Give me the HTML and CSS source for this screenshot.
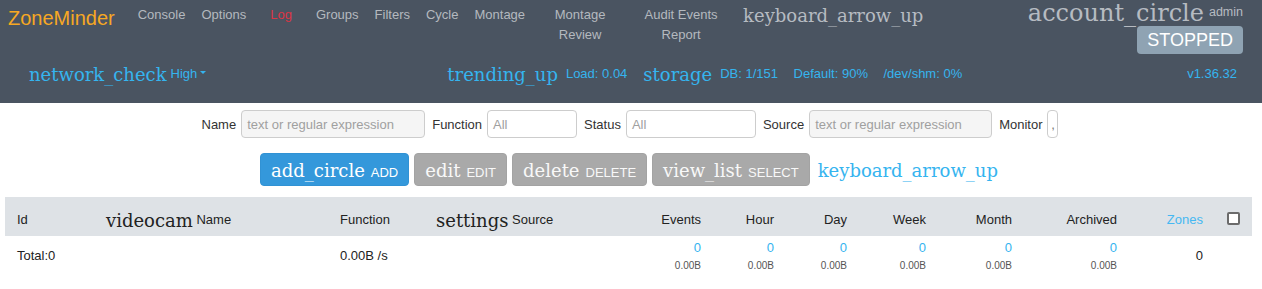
FILE: index.html
```html
<!DOCTYPE html>
<html lang="en">
<head>
<meta charset="utf-8">
<title>ZoneMinder - Console</title>
<link rel="stylesheet" href="styles.css">
</head>
<body>
<nav class="navbar">
  <div class="nav-top">
    <a class="brand" href="#">ZoneMinder</a>
    <ul class="nav-links">
      <li>Console</li>
      <li>Options</li>
      <li class="log">Log</li>
      <li>Groups</li>
      <li>Filters</li>
      <li>Cycle</li>
      <li>Montage</li>
      <li class="wrap-mr">Montage Review</li>
      <li class="wrap-ae">Audit Events Report</li>
    </ul>
    <span class="icon toggle-icon">keyboard_arrow_up</span>
    <div class="account">
      <div class="account-row">
        <span class="icon account-icon">account_circle</span><span class="admin">admin</span>
      </div>
      <span class="status-btn">STOPPED</span>
    </div>
  </div>
  <div class="nav-status">
    <div class="bandwidth"><span class="icon">network_check</span><span class="high">High</span><span class="caret"></span></div>
    <div class="stats"><span class="icon">trending_up</span><span class="after-icon">Load: 0.04</span><span class="icon stat-icon">storage</span><span class="after-icon">DB: 1/151</span><span class="stat">Default: 90%</span><span class="stat">/dev/shm: 0%</span></div>
    <div class="version">v1.36.32</div>
  </div>
</nav>

<div class="filters">
  <div class="filter"><span>Name</span><span class="input text w-name">text or regular expression</span></div>
  <div class="filter"><span>Function</span><span class="input w-fn">All</span></div>
  <div class="filter"><span>Status</span><span class="input w-st">All</span></div>
  <div class="filter"><span>Source</span><span class="input text w-src">text or regular expression</span></div>
  <div class="filter"><span>Monitor</span><span class="input w-mon">,</span></div>
</div>

<div class="actions">
  <span class="btn btn-primary"><span class="icon">add_circle</span><span class="lbl">ADD</span></span>
  <span class="btn btn-normal"><span class="icon">edit</span><span class="lbl">EDIT</span></span>
  <span class="btn btn-normal"><span class="icon">delete</span><span class="lbl">DELETE</span></span>
  <span class="btn btn-normal"><span class="icon">view_list</span><span class="lbl">SELECT</span></span>
  <span class="icon collapse-icon">keyboard_arrow_up</span>
</div>

<table class="monitors">
  <thead>
    <tr>
      <th class="c-id">Id</th>
      <th class="c-name"><span class="icon th-icon">videocam</span> Name</th>
      <th class="c-fn">Function</th>
      <th class="c-src"><span class="icon th-icon">settings</span> Source</th>
      <th class="c-ev num">Events</th>
      <th class="c-hr num">Hour</th>
      <th class="c-day num">Day</th>
      <th class="c-wk num">Week</th>
      <th class="c-mo num">Month</th>
      <th class="c-ar num">Archived</th>
      <th class="c-zn num zones">Zones</th>
      <th class="c-cb"><span class="checkbox"></span></th>
    </tr>
  </thead>
  <tbody>
    <tr>
      <td>Total:0</td>
      <td></td>
      <td>0.00B /s</td>
      <td></td>
      <td class="num"><div class="cnt">0</div><div class="size">0.00B</div></td>
      <td class="num"><div class="cnt">0</div><div class="size">0.00B</div></td>
      <td class="num"><div class="cnt">0</div><div class="size">0.00B</div></td>
      <td class="num"><div class="cnt">0</div><div class="size">0.00B</div></td>
      <td class="num"><div class="cnt">0</div><div class="size">0.00B</div></td>
      <td class="num"><div class="cnt">0</div><div class="size">0.00B</div></td>
      <td class="num">0</td>
      <td></td>
    </tr>
  </tbody>
</table>
</body>
</html>
```

FILE: styles.css
```css
* { box-sizing: border-box; }

body {
  margin: 0;
  font-family: "Liberation Sans", Arial, sans-serif;
  font-size: 13px;
  color: #222;
  background: #fff;
}

.icon {
  font-family: "DejaVu Serif", serif;
  font-weight: normal;
  line-height: 1;
}

/* ---------- navbar ---------- */
.navbar {
  background: #4a5461;
  height: 103px;
}

.nav-top {
  display: flex;
  align-items: flex-start;
  height: 58px;
  padding: 0 19px 0 8px;
}

.brand {
  font-size: 20px;
  line-height: 24px;
  margin-top: 6px;
  color: #f7a823;
  text-decoration: none;
}

.nav-links {
  display: flex;
  list-style: none;
  margin: 5px 0 0 15px;
  padding: 0;
  line-height: 20px;
}

.nav-links li {
  padding: 0 8px;
  color: #b4b9bf;
}

.nav-links li.log {
  padding: 0 16px;
  color: #dc3545;
}

.nav-links li.wrap-mr {
  width: 94px;
  text-align: center;
}

.nav-links li.wrap-ae {
  width: 108px;
  text-align: center;
}

.toggle-icon {
  font-size: 18px;
  line-height: 24px;
  margin: 4px 0 0 8px;
  color: #b6bbc1;
}

.account {
  margin-left: auto;
  display: flex;
  flex-direction: column;
  align-items: flex-end;
}

.account-row {
  display: flex;
  align-items: flex-start;
  margin-top: 1px;
}

.account-icon {
  font-size: 24px;
  line-height: 25px;
  color: #b6bbc1;
}

.admin {
  font-size: 12.5px;
  line-height: 15px;
  margin: 4px 0 0 5px;
  color: #b6bbc1;
}

.status-btn {
  display: block;
  height: 28px;
  padding: 0 10px;
  font-size: 18px;
  line-height: 28px;
  background: #8fa3b3;
  color: #fff;
  border-radius: 4px;
}

.nav-status {
  display: flex;
  align-items: flex-start;
  padding: 5.5px 25px 0 29px;
  line-height: 20px;
  white-space: nowrap;
  color: #35b4ef;
}

.nav-status .icon {
  font-size: 18px;
  vertical-align: -3.4px;
}

.high { margin-left: 4px; }

.caret {
  display: inline-block;
  width: 0;
  height: 0;
  margin-left: 3px;
  vertical-align: 3.3px;
  border-top: 3px solid;
  border-left: 3px solid transparent;
  border-right: 3px solid transparent;
}

.stats { margin-left: 241px; }
.after-icon { margin-left: 8px; }
.stat-icon { margin-left: 16px; }
.stat { margin-left: 15.5px; }
.version { margin-left: auto; }

/* ---------- filters ---------- */
.filters {
  display: flex;
  justify-content: center;
  align-items: center;
  gap: 7px;
  padding-top: 7px;
  padding-right: 2px;
}

.filter {
  display: flex;
  align-items: center;
  gap: 5px;
  color: #333;
}

.input {
  display: flex;
  align-items: center;
  height: 28px;
  padding: 0 5px;
  border: 1px solid #cdcdcd;
  border-radius: 4px;
  background: #fff;
  color: #a0a0a0;
  white-space: nowrap;
  overflow: hidden;
}

.input.text { background: #f5f5f5; }
.w-name { width: 184px; }
.w-fn { width: 90px; }
.w-st { width: 130px; }
.w-src { width: 183px; }
.w-mon {
  width: 11px;
  padding: 0;
  justify-content: center;
  color: #777;
}

/* ---------- actions ---------- */
.actions {
  display: flex;
  justify-content: center;
  align-items: baseline;
  gap: 5px;
  margin-top: 15px;
  padding-right: 4px;
}

.btn {
  display: inline-flex;
  align-items: baseline;
  height: 33px;
  padding: 7.8px 10px 0;
  border: 1px solid;
  border-radius: 4px;
  color: #fff;
  white-space: nowrap;
}

.btn .icon { font-size: 18px; }

.btn .lbl {
  font-size: 13px;
  line-height: 1;
  margin-left: 6px;
}

.btn-primary {
  background: #3498db;
  border-color: #3192d4;
}

.btn-normal {
  background: #a9a9a9;
  border-color: #a3a3a3;
  color: #f8f8f8;
}

.collapse-icon {
  font-size: 18px;
  color: #35b4ef;
  margin-left: 3px;
}

/* ---------- table ---------- */
.monitors {
  width: 1247px;
  margin: 11px 5px 0;
  border-collapse: collapse;
  table-layout: fixed;
}

.monitors th {
  background: #dee2e6;
  font-weight: normal;
  text-align: left;
  padding: 13px 12px 6px;
  line-height: 20px;
  color: #222;
  white-space: nowrap;
  vertical-align: bottom;
}

.monitors td {
  padding: 2px 12px;
  line-height: 19.5px;
  vertical-align: middle;
  white-space: nowrap;
}

.monitors .num { text-align: right; }

.th-icon {
  font-size: 18px;
  vertical-align: -3px;
}

.monitors th.zones { color: #45b8f2; }

.c-id { width: 89px; }
.c-name { width: 234px; }
.c-fn { width: 96px; }
.c-src { width: 196px; }
.c-ev { width: 93px; }
.c-hr { width: 73px; }
.c-day { width: 73px; }
.c-wk { width: 79px; }
.c-mo { width: 86px; }
.c-ar { width: 105px; }
.c-zn { width: 86px; }
.c-cb { width: 37px; }

.checkbox {
  display: inline-block;
  width: 13px;
  height: 13px;
  border: 2px solid #6b6b6b;
  border-radius: 2px;
  background: #fff;
  vertical-align: -1px;
}

.cnt {
  color: #35b4ef;
  line-height: 19.5px;
}

.size {
  font-size: 10px;
  line-height: 15px;
  color: #555;
}
```
